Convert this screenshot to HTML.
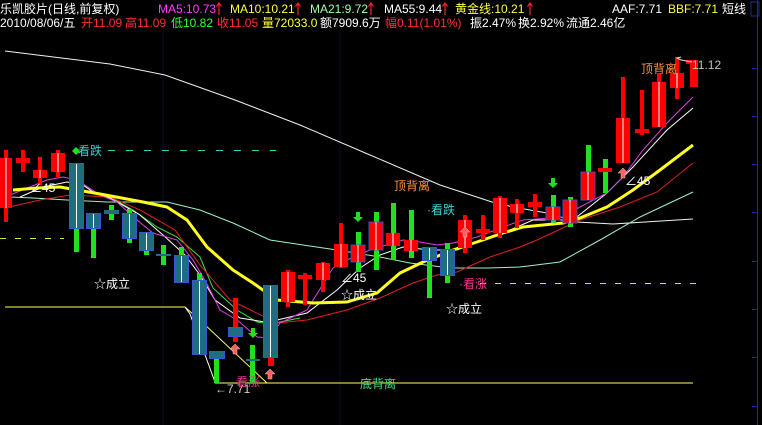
<!DOCTYPE html>
<html><head><meta charset="utf-8"><style>
html,body{margin:0;padding:0;background:#000;width:762px;height:425px;overflow:hidden}
svg{display:block}
text{font-family:"Liberation Sans","Noto Sans CJK SC","WenQuanYi Zen Hei",sans-serif;font-size:12px}
</style></head><body>
<svg width="762" height="425" viewBox="0 0 762 425" xmlns="http://www.w3.org/2000/svg">
<rect width="762" height="425" fill="#000"/>
<line x1="163" y1="30" x2="163" y2="425" stroke="#0a0a30" stroke-width="1"/>
<line x1="340" y1="30" x2="340" y2="425" stroke="#0a0a30" stroke-width="1"/>
<line x1="757.5" y1="0" x2="757.5" y2="425" stroke="#1a2a9a" stroke-width="1"/>
<g stroke="#1a2a9a"><line x1="752" y1="68.5" x2="757" y2="68.5"/><line x1="752" y1="116.5" x2="757" y2="116.5"/><line x1="752" y1="164.5" x2="757" y2="164.5"/><line x1="752" y1="212.5" x2="757" y2="212.5"/><line x1="752" y1="261.5" x2="757" y2="261.5"/><line x1="752" y1="309.5" x2="757" y2="309.5"/><line x1="752" y1="357.5" x2="757" y2="357.5"/><line x1="752" y1="406.5" x2="757" y2="406.5"/></g>
<rect x="751" y="2" width="8" height="14" fill="none" stroke="#1a2a9a"/>

<text x="0" y="13" fill="#fff">乐凯胶片(日线,前复权)</text>
<text x="158" y="13" fill="#ff3cff">MA5:10.73</text>
<text x="230" y="13" fill="#ffff40">MA10:10.21</text>
<text x="310" y="13" fill="#a0ffa0">MA21:9.72</text>
<text x="384" y="13" fill="#fff">MA55:9.44</text>
<text x="455" y="13" fill="#ffff40">黄金线:10.21</text>
<g stroke="#ff2020" stroke-width="1.2" fill="none">
<path d="M219,15 V3 M216.5,6.5 L219,3 L221.5,6.5"/>
<path d="M298,15 V3 M295.5,6.5 L298,3 L300.5,6.5"/>
<path d="M371,15 V3 M368.5,6.5 L371,3 L373.5,6.5"/>
<path d="M445,15 V3 M442.5,6.5 L445,3 L447.5,6.5"/>
<path d="M530,15 V3 M527.5,6.5 L530,3 L532.5,6.5"/>
</g>
<text x="612" y="13" fill="#fff">AAF:7.71</text>
<text x="668" y="13" fill="#ffff40">BBF:7.71</text>
<text x="722" y="13" fill="#fff">短线</text>
<text x="0" y="27" fill="#fff">2010/08/06/五</text>
<text x="81" y="27" fill="#ff3030">开11.09</text>
<text x="125" y="27" fill="#ff3030">高11.09</text>
<text x="171" y="27" fill="#30ff30">低10.82</text>
<text x="217" y="27" fill="#ff3030">收11.05</text>
<text x="262" y="27" fill="#ffff40">量72033.0</text>
<text x="320" y="27" fill="#fff">额7909.6万</text>
<text x="385" y="27" fill="#ff3030">幅0.11(1.01%)</text>
<text x="470" y="27" fill="#fff">振2.47%</text>
<text x="518" y="27" fill="#fff">换2.92%</text>
<text x="566" y="27" fill="#fff">流通2.46亿</text>

<polyline fill="none" stroke="#f0f0f0" stroke-width="1" points="5,51 110,64 165,75 235,100 300,125 370,155 440,185 492,202 513,207 547,213 577,222 613,224 693,219"/>
<polyline fill="none" stroke="#a0f0c0" stroke-width="1" points="10,197 33,198 67,200 107,202 167,202 200,210 233,223 270,240 303,245 337,250 380,257 410,263 450,268 487,268 520,267 560,262 600,240 640,217 693,192"/>
<polyline fill="none" stroke="#40e040" stroke-width="1" points="110,197 133,210 157,227 177,237 200,257 213,288 237,310 257,322 270,324 300,318"/>
<polyline fill="none" stroke="#e02020" stroke-width="1" points="5,208 40,200 70,195 110,197 140,210 175,230 200,265 230,300 277,323 307,320 347,310 380,298 413,283 437,275 457,272 490,257 520,247 537,240 580,220 620,207 657,192 693,163"/>
<polyline fill="none" stroke="#fff" stroke-width="1" points="20,197 43,187 67,182 83,185 93,192 110,198 140,215 163,235 185,255 200,275 215,300 240,318 265,322 277,320 307,313 337,290 360,268 380,255 403,247 430,250 457,250 483,240 510,230 533,220 573,220 607,193 633,167 667,130 693,108"/>
<polyline fill="none" stroke="#e040e0" stroke-width="1" points="10,195 47,180 63,177 77,180 100,195 117,202 137,220 153,233 177,240 193,260 207,284 220,310 237,320 257,337 270,338 280,323 307,310 333,268 347,260 370,250 403,240 420,242 437,245 453,243 477,237 503,227 523,220 563,217 580,207 607,193 623,177 643,150 667,123 693,97"/>
<polyline fill="none" stroke="#ffff20" stroke-width="3" stroke-linejoin="round" points="13,190 37,188 60,187 100,194 143,202 167,207 187,220 207,247 233,270 253,283 277,300 313,303 347,302 377,293 400,273 423,262 453,250 477,242 503,233 523,227 563,223 580,218 607,207 633,190 660,170 693,145"/>

<polyline fill="none" stroke="#ffff60" stroke-width="1" points="5,307 185,307 203,323 267,383 693,383"/>
<polyline fill="none" stroke="#fff" stroke-width="1" points="185,307 190,314 215,382"/>
<line x1="215" y1="383" x2="267" y2="383" stroke="#ffff60"/>

<line x1="108" y1="150.5" x2="276" y2="150.5" stroke="#30d0d0" stroke-dasharray="7,11"/>
<line x1="0" y1="238.5" x2="64" y2="238.5" stroke="#e0e040" stroke-dasharray="6,9"/>
<line x1="480" y1="283.5" x2="700" y2="283.5" stroke="#e0e040" stroke-dasharray="6,9"/>

<g id="c">
<rect x="4" y="150" width="4" height="72" fill="#f00"/><rect x="0" y="158" width="12" height="50" fill="#f00"/><line x1="6" y1="158" x2="6" y2="208" stroke="#fff"/>
<rect x="21" y="150" width="4" height="22" fill="#f00"/><rect x="16" y="158" width="14" height="5" fill="#f00"/>
<rect x="38" y="157" width="4" height="28" fill="#f00"/><rect x="33" y="170" width="14" height="8" fill="#f00"/><line x1="40" y1="170" x2="40" y2="178" stroke="#fff"/>
<rect x="56" y="150" width="4" height="27" fill="#f00"/><rect x="51" y="153" width="14" height="19" fill="#f00"/><line x1="58" y1="153" x2="58" y2="172" stroke="#fff"/>

<rect x="74" y="228" width="5" height="24" fill="#20e020"/><rect x="69.5" y="163.5" width="14" height="65" fill="#1e6e80" stroke="#3358d0"/><line x1="76.5" y1="164" x2="76.5" y2="228" stroke="#fff"/>
<rect x="91" y="228" width="5" height="30" fill="#20e020"/><rect x="86.5" y="213.5" width="14" height="15" fill="#1e6e80" stroke="#3358d0"/><line x1="93.5" y1="214" x2="93.5" y2="228" stroke="#fff"/>
<rect x="109" y="205" width="5" height="15" fill="#20e020"/><rect x="104" y="210" width="15" height="4" fill="#1e6e80"/>
<rect x="127" y="209" width="5" height="34" fill="#20e020"/><rect x="122.5" y="213.5" width="14" height="25" fill="#1e6e80" stroke="#3358d0"/><line x1="129.5" y1="214" x2="129.5" y2="238" stroke="#fff"/>
<rect x="144" y="232" width="5" height="23" fill="#20e020"/><rect x="139.5" y="232.5" width="14" height="18" fill="#1e6e80" stroke="#3358d0"/><line x1="146.5" y1="233" x2="146.5" y2="250" stroke="#fff"/>
<rect x="161" y="245" width="5" height="20" fill="#20e020"/><rect x="156" y="254" width="15" height="2" fill="#1e6e80"/>
<rect x="179" y="247" width="5" height="36" fill="#20e020"/><rect x="174.5" y="255.5" width="14" height="27" fill="#1e6e80" stroke="#3358d0"/><line x1="181.5" y1="256" x2="181.5" y2="282" stroke="#fff"/>
<rect x="197" y="273" width="5" height="10" fill="#20e020"/><rect x="192.5" y="280.5" width="14" height="74" fill="#1e6e80" stroke="#3358d0"/><line x1="199.5" y1="281" x2="199.5" y2="354" stroke="#fff"/>
<rect x="214" y="352" width="5" height="31" fill="#20e020"/><rect x="209.5" y="351.5" width="15" height="7" fill="#1e6e80" stroke="#3358d0"/>
<rect x="233" y="298" width="5" height="44" fill="#f00"/><rect x="228.5" y="327.5" width="14" height="9" fill="#1e6e80" stroke="#3358d0"/>
<rect x="250" y="345" width="5" height="38" fill="#20e020"/><rect x="246" y="359" width="14" height="2" fill="#1e6e80"/>
<rect x="268" y="355" width="6" height="11" fill="#f00"/><rect x="263.5" y="285.5" width="14" height="72" fill="#1e6e80" stroke="#3358d0"/><line x1="270.5" y1="286" x2="270.5" y2="357" stroke="#fff"/>

<rect x="286" y="270" width="4" height="37" fill="#f00"/><rect x="281" y="272" width="14" height="30" fill="#f00"/><line x1="288" y1="272" x2="288" y2="302" stroke="#fff"/>
<rect x="303" y="273" width="4" height="32" fill="#f00"/><rect x="298" y="275" width="14" height="4" fill="#f00"/>
<rect x="321" y="262" width="4" height="30" fill="#f00"/><rect x="316" y="263" width="14" height="17" fill="#f00"/><line x1="323" y1="263" x2="323" y2="280" stroke="#fff"/>
<rect x="339" y="223" width="4" height="45" fill="#f00"/><rect x="334" y="244" width="14" height="23" fill="#f00"/><line x1="341" y1="244" x2="341" y2="267" stroke="#fff"/>
<rect x="356" y="232" width="5" height="40" fill="#20e020"/><rect x="351" y="245" width="14" height="17" fill="#f00" stroke="#4050c0"/><line x1="358" y1="245" x2="358" y2="262" stroke="#fff"/>
<rect x="374" y="212" width="5" height="58" fill="#20e020"/><rect x="369" y="222" width="14" height="28" fill="#f00" stroke="#4050c0"/><line x1="376" y1="222" x2="376" y2="250" stroke="#fff"/>
<rect x="391" y="203" width="5" height="57" fill="#20e020"/><rect x="386" y="233" width="14" height="13" fill="#f00"/><line x1="393" y1="233" x2="393" y2="246" stroke="#fff"/>
<rect x="409" y="210" width="5" height="48" fill="#20e020"/><rect x="404" y="240" width="14" height="11" fill="#f00"/><line x1="411" y1="240" x2="411" y2="251" stroke="#fff"/>
<rect x="427" y="260" width="5" height="38" fill="#20e020"/><rect x="422.5" y="247.5" width="14" height="13" fill="#1e6e80" stroke="#3358d0"/><line x1="429.5" y1="248" x2="429.5" y2="260" stroke="#fff"/>
<rect x="445" y="243" width="5" height="40" fill="#20e020"/><rect x="440.5" y="249.5" width="14" height="26" fill="#1e6e80" stroke="#3358d0"/><line x1="447.5" y1="250" x2="447.5" y2="275" stroke="#fff"/>
<rect x="463" y="215" width="4" height="38" fill="#f00"/><rect x="458" y="220" width="14" height="28" fill="#f00"/><line x1="465" y1="220" x2="465" y2="248" stroke="#fff"/>
<rect x="481" y="215" width="4" height="25" fill="#f00"/><rect x="476" y="229" width="14" height="4" fill="#f00"/>
<rect x="498" y="196" width="4" height="42" fill="#f00"/><rect x="493" y="198" width="14" height="35" fill="#f00"/><line x1="500" y1="198" x2="500" y2="233" stroke="#fff"/>
<rect x="515" y="199" width="4" height="29" fill="#f00"/><rect x="510" y="204" width="14" height="9" fill="#f00"/><line x1="517" y1="204" x2="517" y2="213" stroke="#fff"/>
<rect x="533" y="194" width="4" height="23" fill="#f00"/><rect x="528" y="202" width="14" height="5" fill="#f00"/>
<rect x="551" y="195" width="5" height="28" fill="#20e020"/><rect x="546" y="207" width="14" height="13" fill="#f00" stroke="#4050c0"/><line x1="553" y1="207" x2="553" y2="220" stroke="#fff"/>
<rect x="568" y="197" width="5" height="30" fill="#20e020"/><rect x="563" y="200" width="14" height="23" fill="#f00" stroke="#4050c0"/><line x1="570" y1="200" x2="570" y2="223" stroke="#fff"/>
<rect x="586" y="145" width="5" height="30" fill="#20e020"/><rect x="581" y="172" width="14" height="28" fill="#f00" stroke="#4050c0"/><line x1="588" y1="172" x2="588" y2="200" stroke="#fff"/>
<rect x="603" y="159" width="5" height="34" fill="#20e020"/><rect x="598" y="168" width="14" height="4" fill="#f00"/>
<rect x="621" y="77" width="4" height="86" fill="#f00"/><rect x="616" y="118" width="14" height="45" fill="#f00"/><line x1="623" y1="118" x2="623" y2="163" stroke="#fff"/>
<rect x="640" y="90" width="4" height="45" fill="#f00"/><rect x="635" y="129" width="14" height="4" fill="#f00"/>
<rect x="657" y="73" width="4" height="54" fill="#f00"/><rect x="652" y="82" width="14" height="45" fill="#f00"/><line x1="659" y1="82" x2="659" y2="127" stroke="#fff"/>
<rect x="675" y="57" width="4" height="42" fill="#f00"/><rect x="670" y="73" width="14" height="15" fill="#f00"/><line x1="677" y1="73" x2="677" y2="88" stroke="#fff"/>
<rect x="690" y="60" width="8" height="27" fill="#f00"/><rect x="686" y="60" width="10" height="4" fill="#f00"/>
</g>

<g fill="#ff6060" stroke="#ffb0b0" stroke-width="0.5">
<path d="M235,344 l-5,5 h3 v5 h4 v-5 h3 z"/>
<path d="M270,369 l-5,5 h3 v5 h4 v-5 h3 z"/>
<path d="M465,227 l-5,5 h3 v5 h4 v-5 h3 z"/>
<path d="M623,168 l-5,5 h3 v5 h4 v-5 h3 z"/>
</g>
<g fill="#20e020">
<path d="M253,338 l-5,-5 h3 v-5 h4 v5 h3 z"/>
<path d="M358,222 l-5,-5 h3 v-5 h4 v5 h3 z"/>
<path d="M553,188 l-5,-5 h3 v-5 h4 v5 h3 z"/>
<path d="M76,147 l-4,4 4,4 4,-4 z"/>
</g>

<text x="78" y="155" fill="#40d0d0">看跌</text>
<text x="30" y="192" fill="#fff">∠45</text>
<text x="94" y="288" fill="#fff">☆成立</text>
<text x="215" y="393" fill="#d0d0d0">←7.71</text>
<text x="236" y="386" fill="#ff3090">看涨</text>
<text x="360" y="388" fill="#40e080">底背离</text>
<text x="341" y="282" fill="#fff">∠45</text>
<text x="341" y="299" fill="#fff">☆成立</text>
<text x="394" y="190" fill="#ff9040">顶背离</text>
<text x="427" y="214" fill="#40d0d0">·看跌</text>
<text x="459" y="288" fill="#ff3090">·看涨</text>
<text x="446" y="313" fill="#fff">☆成立</text>
<text x="625" y="185" fill="#fff">∠45</text>
<text x="641" y="73" fill="#ff9040">顶背离</text>
<text x="692" y="69" fill="#c0c0c0">11.12</text>
<polyline fill="none" stroke="#ddd" points="681,57 677,58 681,60 692,62"/>
</svg>
</body></html>
